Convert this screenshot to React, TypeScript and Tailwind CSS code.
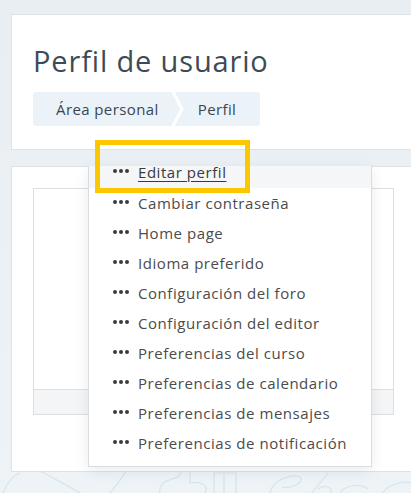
import { Fragment } from "react";

const FONT = "font-['Open_Sans','Liberation_Sans',sans-serif]";

const ITEMS = [
  "Editar perfil",
  "Cambiar contraseña",
  "Home page",
  "Idioma preferido",
  "Configuración del foro",
  "Configuración del editor",
  "Preferencias del curso",
  "Preferencias de calendario",
  "Preferencias de mensajes",
  "Preferencias de notificación",
];

function Dots() {
  return (
    <span className="flex items-center gap-[2px] mr-[9px] -mt-[2px]">
      <span className="w-[4px] h-[4px] rounded-full bg-[#3c3c3c]" />
      <span className="w-[4px] h-[4px] rounded-full bg-[#3c3c3c]" />
      <span className="w-[4px] h-[4px] rounded-full bg-[#3c3c3c]" />
    </span>
  );
}

function Pattern() {
  return (
    <svg className="absolute left-0 bottom-0" width="411" height="24" viewBox="0 0 411 24" fill="none" stroke="#d9e3e8" strokeWidth="1.2">
      <path d="M3 24 C8 12 14 6 20 4" />
      <path d="M40 2 C55 10 70 18 80 24" />
      <path d="M110 24 C118 14 124 6 126 2" />
      <path d="M160 24 C158 16 165 12 172 10 C180 8 182 4 180 2" />
      <path d="M190 2 L190 14 C200 12 210 16 205 24" />
      <path d="M214 24 L214 4 L236 4 L236 24 M224 4 L224 24" />
      <path d="M270 24 C272 12 290 4 300 8 C305 14 290 20 282 18" />
      <path d="M312 24 L328 4 M318 20 C325 14 335 20 330 24" />
      <path d="M340 24 C345 16 360 14 368 20" />
      <path d="M382 24 C390 14 405 12 411 14" />
    </svg>
  );
}

export default function App() {
  return (
    <div className={`${FONT} relative w-[411px] h-[493px] overflow-hidden bg-gradient-to-b from-[#e8eef1] to-[#edf3f6]`}>
      <Pattern />
      <div className="relative pl-[11px] pt-[14px]">
        {/* header card */}
        <div className="bg-white border border-[#dce2e6] w-[420px] h-[136px] pl-[21px] pt-[28px]">
          <h1 className="text-[29px] leading-[36px] text-[#3d4b56] tracking-[0.85px]">Perfil de usuario</h1>
          <nav className="mt-[13px] flex items-center h-[34px] w-[227px] bg-[#ebf3f8] rounded-[3px] text-[15px] text-[#3a4652] tracking-[0.4px]">
            <span className="pl-[23px] pr-[12px]">Área personal</span>
            <svg width="14" height="34" viewBox="0 0 14 34" className="shrink-0">
              <path d="M2 0 L11 17 L2 34" stroke="white" strokeWidth="3" fill="none" />
            </svg>
            <span className="pl-[13px]">Perfil</span>
          </nav>
        </div>

        <div className="h-[16px]" />

        {/* content card */}
        <div className="bg-white border border-[#dce2e6] w-[420px] h-[306px] pl-[21px] pt-[21px]">
          <div className="w-[361px] h-[227px] border border-[#dcdfe3] flex flex-col">
            <div className="flex-1" />
            <div className="h-[25px] bg-[#f3f5f7] border-t border-[#dcdfe3]" />
          </div>
        </div>
      </div>

      {/* dropdown */}
      <div className="absolute left-[88px] top-[166px] w-[284px] bg-white border border-[#d9dde1] border-t-0 shadow-[0_4px_14px_rgba(0,0,0,0.08)] pb-[8px] text-[15px] tracking-[0.55px]">
        {ITEMS.map((label, i) => (
          <Fragment key={label}>
            {i === 0 ? (
              <div className="h-[22px] pl-[24px] bg-[#f4f6f8] text-[#3a3a3a]">
                <div className="flex items-center h-[12px] leading-[12px]">
                  <Dots />
                  <span className="underline underline-offset-[3px]">{label}</span>
                </div>
              </div>
            ) : (
              <div className="flex items-center h-[30px] pl-[24px] text-[#4b4b4b]">
                <Dots />
                <span>{label}</span>
              </div>
            )}
          </Fragment>
        ))}
      </div>

      {/* highlight */}
      <div className="absolute left-[95px] top-[140px] w-[155px] h-[53px] border-[5px] border-[#fdc700]" />
    </div>
  );
}
